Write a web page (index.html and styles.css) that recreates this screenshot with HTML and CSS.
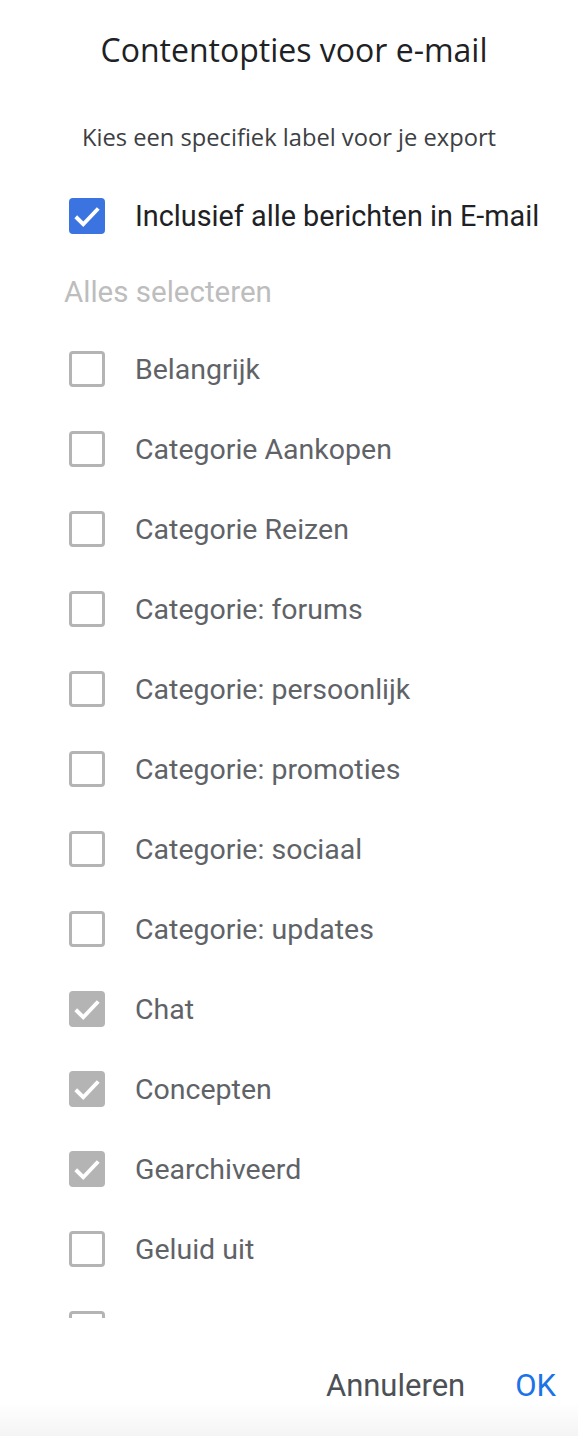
FILE: index.html
```html
<!DOCTYPE html>
<html lang="nl">

<head>
    <meta charset="UTF-8">
    <meta name="viewport" content="width=device-width, initial-scale=1.0">
    <title>Contentopties voor e-mail</title>

    <link rel="stylesheet" href="styles.css">
</head>

<body>
    <div class="dialog">
        <h1 class="dialog-title">Contentopties voor e-mail</h1>
        <p class="dialog-subtitle">Kies een specifiek label voor je export</p>

        <div class="option option-main">
            <span class="box box-blue">
                <svg viewBox="0 0 24 24"><path d="M4.5 12.5l5 5L19.5 7"/></svg>
            </span>
            <span>Inclusief alle berichten in E-mail</span>
        </div>

        <div class="select-all">Alles selecteren</div>

        <div class="label-list">
            <div class="option"><span class="box"></span><span>Belangrijk</span></div>
            <div class="option"><span class="box"></span><span>Categorie Aankopen</span></div>
            <div class="option"><span class="box"></span><span>Categorie Reizen</span></div>
            <div class="option"><span class="box"></span><span>Categorie: forums</span></div>
            <div class="option"><span class="box"></span><span>Categorie: persoonlijk</span></div>
            <div class="option"><span class="box"></span><span>Categorie: promoties</span></div>
            <div class="option"><span class="box"></span><span>Categorie: sociaal</span></div>
            <div class="option"><span class="box"></span><span>Categorie: updates</span></div>
            <div class="option">
                <span class="box box-gray"><svg viewBox="0 0 24 24"><path d="M4.5 12.5l5 5L19.5 7"/></svg></span>
                <span>Chat</span>
            </div>
            <div class="option">
                <span class="box box-gray"><svg viewBox="0 0 24 24"><path d="M4.5 12.5l5 5L19.5 7"/></svg></span>
                <span>Concepten</span>
            </div>
            <div class="option">
                <span class="box box-gray"><svg viewBox="0 0 24 24"><path d="M4.5 12.5l5 5L19.5 7"/></svg></span>
                <span>Gearchiveerd</span>
            </div>
            <div class="option"><span class="box"></span><span>Geluid uit</span></div>
            <div class="option"><span class="box"></span><span>Gemarkeerd</span></div>
        </div>

        <div class="dialog-actions">
            <button class="action-cancel">Annuleren</button>
            <button class="action-ok">OK</button>
        </div>
    </div>
</body>

</html>
```

FILE: styles.css
```css
* {
    box-sizing: border-box;
}

body {
    margin: 0;
    background-color: #fff;
    font-family: Roboto, "Liberation Sans", sans-serif;
}

.dialog {
    display: flex;
    flex-direction: column;
    height: 100vh;
}

.dialog-title {
    margin: 0;
    padding: 31px 0 0 10px;
    font-family: "Open Sans", Roboto, sans-serif;
    font-size: 32px;
    font-weight: 400;
    line-height: 38px;
    text-align: center;
    color: #202124;
}

.dialog-subtitle {
    margin: 54px 0 0;
    font-family: "Open Sans", Roboto, sans-serif;
    font-size: 23.7px;
    line-height: 28px;
    text-align: center;
    color: #3c4043;
}

.option {
    display: flex;
    align-items: center;
    gap: 30px;
    padding-left: 69px;
    font-size: 28.5px;
    color: #5f6368;
}

.option-main {
    margin-top: 47px;
    height: 36px;
    font-size: 28.8px;
    color: #202124;
}

.select-all {
    margin-top: 42px;
    padding-left: 64px;
    font-size: 29.5px;
    line-height: 32px;
    color: #bdbdbd;
}

.label-list {
    flex: 1;
    margin-top: 21px;
    overflow: hidden;
}

.label-list .option {
    height: 80px;
}

.box {
    flex: none;
    display: flex;
    align-items: center;
    justify-content: center;
    width: 36px;
    height: 36px;
    border: 3px solid #b4b4b4;
    border-radius: 4px;
}

.box svg {
    width: 36px;
    height: 36px;
    fill: none;
    stroke: #fff;
    stroke-width: 2.6;
}

.box-blue {
    border: none;
    background-color: #3b73e0;
}

.box-gray {
    border: none;
    background-color: #b4b4b4;
}

.dialog-actions {
    flex: none;
    display: flex;
    justify-content: flex-end;
    gap: 50px;
    height: 118px;
    padding: 50px 22px 0 0;
    background: linear-gradient(to bottom, #fff 72%, #f4f4f4);
}

.dialog-actions button {
    height: 36px;
    padding: 0;
    border: none;
    background: none;
    font-family: Roboto, "Liberation Sans", sans-serif;
    font-size: 31px;
    font-weight: 400;
    line-height: 36px;
    cursor: pointer;
}

.action-cancel {
    color: #4d5156;
}

.action-ok {
    color: #1a73e8;
}
```
